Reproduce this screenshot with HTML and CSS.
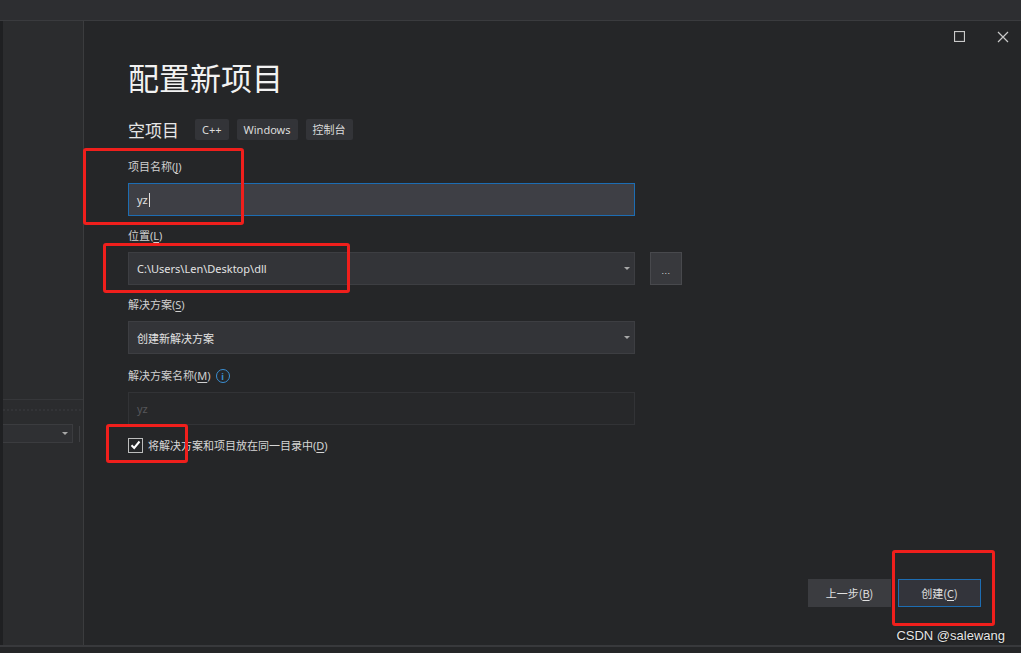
FILE: index.html
```html
<!DOCTYPE html>
<html lang="zh-CN">
<head>
<meta charset="utf-8">
<title>配置新项目</title>
<link rel="stylesheet" href="styles.css">
</head>
<body>
<div class="app">
  <div class="topbar"></div>
  <div class="main">
    <aside class="side">
      <div class="side-line"></div>
      <div class="side-dots"></div>
      <div class="side-row">
        <div class="side-select"><span class="arrow"></span></div>
        <div class="side-bar"></div>
      </div>
    </aside>
    <section class="dialog">
      <div class="winctl">
        <svg class="ico" width="11" height="11" viewBox="0 0 11 11"><rect x="0.5" y="0.5" width="10" height="10" fill="none" stroke="#c9c9c9" stroke-width="1.2"/></svg>
        <svg class="ico" width="12" height="12" viewBox="0 0 12 12"><path d="M1 1 L11 11 M11 1 L1 11" stroke="#c9c9c9" stroke-width="1.2" fill="none"/></svg>
      </div>
      <div class="content">
        <h1 class="title">配置新项目</h1>
        <div class="subtitle">
          <span class="sub-name">空项目</span>
          <span class="tags">
            <span class="tag">C++</span>
            <span class="tag">Windows</span>
            <span class="tag">控制台</span>
          </span>
        </div>
        <div class="form">
          <div class="group">
            <div class="label">项目名称(<u>J</u>)</div>
            <div class="field focus"><span>yz</span><span class="caret"></span></div>
          </div>
          <div class="group">
            <div class="label">位置(<u>L</u>)</div>
            <div class="field-row">
              <div class="field select"><span>C:\Users\Len\Desktop\dll</span><span class="arrow"></span></div>
              <div class="browse"><span class="dots">...</span></div>
            </div>
          </div>
          <div class="group">
            <div class="label">解决方案(<u>S</u>)</div>
            <div class="field select"><span>创建新解决方案</span><span class="arrow"></span></div>
          </div>
          <div class="group last">
            <div class="label">解决方案名称(<u>M</u>) <span class="info">i</span></div>
            <div class="field disabled"><span>yz</span></div>
          </div>
          <label class="check">
            <span class="box"><svg width="11" height="10" viewBox="0 0 11 10"><path d="M1.5 5.2 L4.2 8 L9.5 1.5" stroke="#ffffff" stroke-width="2" fill="none"/></svg></span>
            <span>将解决方案和项目放在同一目录中(<u>D</u>)</span>
          </label>
        </div>
      </div>
      <div class="footer">
        <button class="btn">上一步(<u>B</u>)</button>
        <button class="btn primary">创建(<u>C</u>)</button>
      </div>
      <div class="watermark">CSDN @salewang</div>
      <div class="mark m1"></div>
      <div class="mark m2"></div>
      <div class="mark m3"></div>
      <div class="mark m4"></div>
    </section>
  </div>
  <div class="bottombar"></div>
</div>
</body>
</html>
```
FILE: styles.css
```css
* { box-sizing: border-box; }
html, body { margin: 0; padding: 0; }
body {
  width: 1021px;
  height: 653px;
  overflow: hidden;
  background: #252628;
  font-family: "Noto Sans", "Noto Sans CJK SC", sans-serif;
  color: #d4d4d4;
}
u { text-decoration: underline; text-underline-offset: 2px; }

.app { display: flex; flex-direction: column; height: 653px; }

.topbar {
  height: 21px;
  background: #2d2e31;
  border-bottom: 1px solid #3a3b3e;
  flex: none;
}

.main { display: flex; height: 624px; flex: none; }

.side {
  width: 83px;
  flex: none;
  background: #2b2c2e;
  border-left: 3px solid #1f2022;
  display: flex;
  flex-direction: column;
}
.side-line { margin-top: 378px; height: 1px; background: #36373a; }
.side-dots {
  margin-top: 9px;
  height: 2px;
  background: repeating-linear-gradient(90deg, #333437 0 2px, #2b2c2e 2px 4px);
}
.side-row { margin-top: 13px; display: flex; align-items: center; gap: 6px; }
.side-select {
  width: 70px;
  height: 19px;
  background: #2f3033;
  border: 1px solid #3b3c3f;
  border-left: none;
  display: flex;
  align-items: center;
  justify-content: flex-end;
  padding-right: 4px;
}
.side-bar { width: 1px; height: 16px; background: #3e3f42; }

.arrow {
  width: 0; height: 0;
  border-left: 3px solid transparent;
  border-right: 3px solid transparent;
  border-top: 3px solid #a8a8a8;
}

.dialog {
  flex: 1;
  position: relative;
  background: #252628;
  border-left: 1px solid #3b3c3e;
  display: flex;
  flex-direction: column;
}

.winctl {
  height: 37px;
  flex: none;
  display: flex;
  justify-content: flex-end;
  align-items: flex-start;
  padding-top: 10px;
  padding-right: 12px;
  gap: 32px;
}
.ico { display: block; }

.content { padding-left: 44px; }

.title {
  margin: 0;
  font-family: "Noto Sans CJK SC", sans-serif;
  font-weight: 400;
  font-size: 31px;
  line-height: 38px;
  color: #f2f2f2;
}

.subtitle {
  margin-top: 21px;
  height: 24px;
  display: flex;
  align-items: center;
}
.sub-name {
  font-family: "Noto Sans CJK SC", sans-serif;
  font-size: 17px;
  color: #e6e6e6;
}
.tags { display: flex; gap: 8px; margin-left: 16px; }
.tag {
  height: 21px;
  padding: 0 7px;
  background: #333438;
  border-radius: 2px;
  font-size: 11px;
  line-height: 21px;
  color: #dcdcdc;
  font-family: "Noto Sans", "Noto Sans CJK SC", sans-serif;
}

.form { margin-top: 16px; width: 554px; }
.group { margin-bottom: 10px; }
.group.last { margin-top: 12px; }
.label {
  height: 20px;
  line-height: 20px;
  font-size: 11px;
  color: #d0d0d0;
  margin-bottom: 6px;
  display: flex;
  align-items: center;
}
.info {
  display: inline-flex;
  align-items: center;
  justify-content: center;
  width: 14px;
  height: 14px;
  margin-left: 5px;
  border: 1.5px solid #3a8fd4;
  border-radius: 50%;
  color: #3a8fd4;
  font-size: 9px;
  font-weight: 700;
  line-height: 1;
}

.field {
  width: 507px;
  height: 33px;
  border: 1px solid #3d3e42;
  background: #333438;
  display: flex;
  align-items: center;
  padding: 0 8px;
  font-size: 11px;
  color: #e2e2e2;
}
.field.focus { background: #3e3f45; border-color: #1d6db3; }
.caret { width: 1px; height: 14px; background: #e0e0e0; margin-left: 1px; }
.field.select { justify-content: space-between; padding-right: 4px; }
.field.disabled { background: #27282a; border-color: #323336; color: #56575a; }
.field-row { display: flex; gap: 15px; }
.browse {
  width: 32px;
  height: 33px;
  background: #38393d;
  border: 1px solid #48494d;
  display: flex;
  align-items: center;
  justify-content: center;
}
.dots {
  color: #d8d8d8;
  font-family: "Liberation Sans", sans-serif;
  font-size: 9px;
  letter-spacing: 0.5px;
  margin-top: 4px;
}

.check {
  margin-top: 11px;
  display: flex;
  align-items: center;
  gap: 5px;
  height: 18px;
  font-size: 11px;
  color: #d6d6d6;
}
.box {
  width: 15px;
  height: 15px;
  border: 1px solid #bdbdbd;
  display: flex;
  align-items: center;
  justify-content: center;
}

.footer {
  margin-top: auto;
  display: flex;
  justify-content: flex-end;
  gap: 7px;
  padding: 0 40px 38px 0;
}
.btn {
  width: 83px;
  height: 28px;
  background: #3b3c40;
  border: 1px solid #3b3c40;
  color: #e0e0e0;
  font-family: "Noto Sans CJK SC", sans-serif;
  font-size: 11px;
  padding: 0;
}
.btn.primary { background: #33343b; border-color: #1d6db3; }

.watermark {
  position: absolute;
  right: 16px;
  bottom: 2px;
  font-family: "Liberation Sans", Arial, sans-serif;
  font-size: 13px;
  color: #e6e6e6;
  text-shadow: 0 0 2px #000;
}

.mark {
  position: absolute;
  border: 3px solid #f01f1c;
  border-radius: 3px;
}
.m1 { left: -1px; top: 127px; width: 161px; height: 77px; }
.m2 { left: 19px; top: 222px; width: 247px; height: 50px; }
.m3 { left: 22px; top: 403px; width: 82px; height: 39px; }
.m4 { left: 808px; top: 529px; width: 103px; height: 76px; }

.bottombar {
  flex: 1;
  background: #252628;
  border-top: 2px solid #38393c;
}
```
